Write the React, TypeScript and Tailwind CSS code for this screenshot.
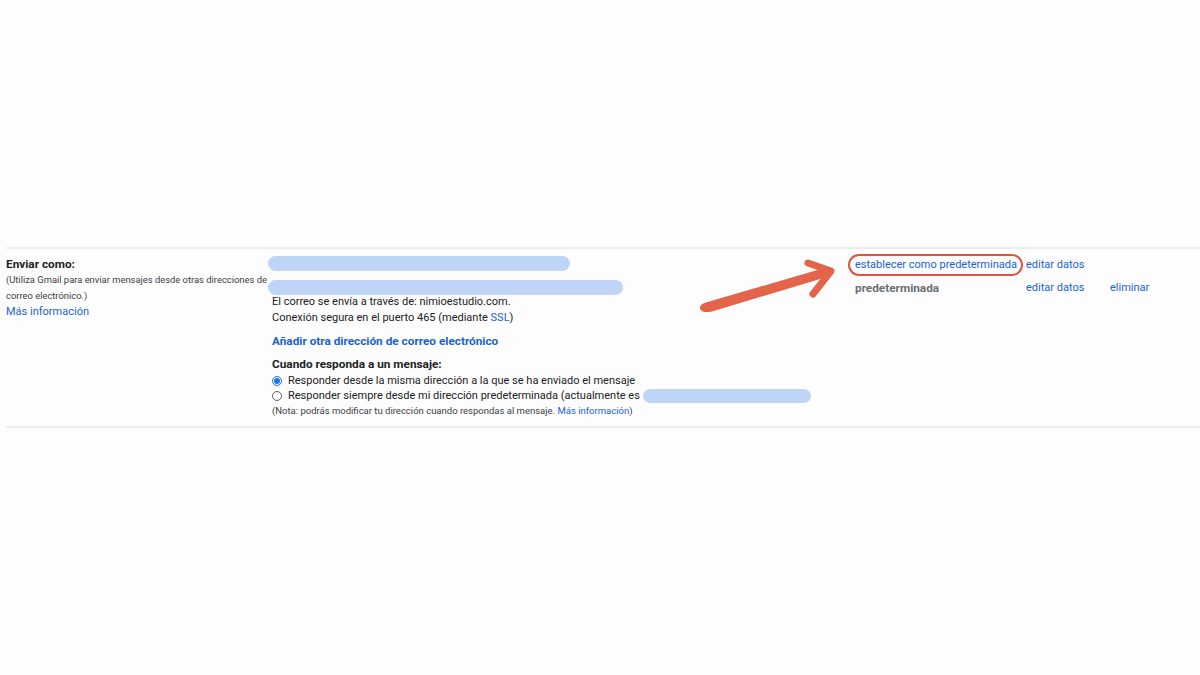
import React from 'react';

const Pill = ({ w, h = 15 }: { w: number; h?: number }) => (
  <span
    className="block rounded-full bg-[#bfd5f7]"
    style={{ width: w, height: h }}
  />
);

const Radio = ({ checked }: { checked?: boolean }) =>
  checked ? (
    <span className="inline-flex h-[10px] w-[10px] items-center justify-center rounded-full border border-[#1a73e8] bg-white">
      <span className="h-[6px] w-[6px] rounded-full bg-[#1a73e8]" />
    </span>
  ) : (
    <span className="inline-block h-[10px] w-[10px] rounded-full border border-[#5f6368] bg-white" />
  );

const Arrow = () => (
  <svg className="pointer-events-none absolute left-0 top-0" width="1200" height="675">
    <path
      d="M 700 309 Q 699 304.5 706 302.5 L 826 267.5 L 830 276 L 712 311.5 Q 702 313.5 700 309 Z"
      fill="#e3634b"
    />
    <path
      d="M 808 263 L 831 271 L 813 294"
      fill="none"
      stroke="#e3634b"
      strokeWidth="7"
      strokeLinecap="round"
      strokeLinejoin="round"
    />
  </svg>
);

export default function App() {
  return (
    <div className="relative h-[675px] w-[1200px] overflow-hidden bg-[#fdfdfd] pt-[247px] font-[Roboto,'Liberation_Sans',Arial,sans-serif] text-[#202124]">
      <div className="ml-[6px] flex h-[181px] border-y-2 border-[#ededed]">
        {/* label column */}
        <div className="w-[262px] pt-[7px]">
          <div className="text-[11.8px] font-bold leading-[16px] text-[#202124]">Enviar como:</div>
          <div className="text-[9.4px] leading-[16px] text-[#3c4043]">
            (Utiliza Gmail para enviar mensajes desde otras direcciones de correo electrónico.)
          </div>
          <div className="text-[11px] leading-[16px] text-[#1a62d6]">Más información</div>
        </div>

        {/* addresses column */}
        <div className="w-[580px] pt-[7px]">
          <Pill w={302} />
          <div className="mt-[9px]">
            <Pill w={355} />
          </div>
          <div className="mt-[-1px] pl-[4px] text-[11px] leading-[16px]">
            <div>El correo se envía a través de: nimioestudio.com.</div>
            <div>
              Conexión segura en el puerto 465 (mediante <span className="text-[#1a62d6]">SSL</span>)
            </div>
            <div className="mt-[7px] text-[11.8px] font-bold text-[#1a62d6]">
              Añadir otra dirección de correo electrónico
            </div>
            <div className="mt-[7px] text-[11.8px] font-bold">Cuando responda a un mensaje:</div>
            <div className="mt-[1px] flex h-[15px] items-center gap-[6px]">
              <Radio checked />
              <span>Responder desde la misma dirección a la que se ha enviado el mensaje</span>
            </div>
            <div className="flex h-[15px] items-center gap-[6px]">
              <Radio />
              <span className="flex items-center">
                Responder siempre desde mi dirección predeterminada (actualmente es
                <span className="ml-[3px] inline-flex">
                  <Pill w={168} h={14} />
                </span>
              </span>
            </div>
            <div className="mt-[1px] text-[9.5px] leading-[14px] text-[#3c4043]">
              (Nota: podrás modificar tu dirección cuando respondas al mensaje.{' '}
              <span className="text-[#1a62d6]">Más información</span>)
            </div>
          </div>
        </div>

        {/* actions column */}
        <div className="pt-[5px] text-[11px]">
          <div className="flex h-[22px] items-center">
            <div className="w-[178px]">
              <span className="inline-flex h-[22px] items-center rounded-[12px] border-2 border-[#e0523e] pl-[5px] pr-[4px] leading-[16px] text-[#1a62d6]">
                establecer como predeterminada
              </span>
            </div>
            <div className="w-[84px] text-[#1a62d6]">editar datos</div>
          </div>
          <div className="mt-[4px] flex h-[16px] items-center leading-[16px]">
            <div className="w-[178px] pl-[7px] text-[11.8px] font-bold text-[#6b6e72]">predeterminada</div>
            <div className="w-[84px] text-[#1a62d6]">editar datos</div>
            <div className="text-[#1a62d6]">eliminar</div>
          </div>
        </div>
      </div>
      <Arrow />
    </div>
  );
}
